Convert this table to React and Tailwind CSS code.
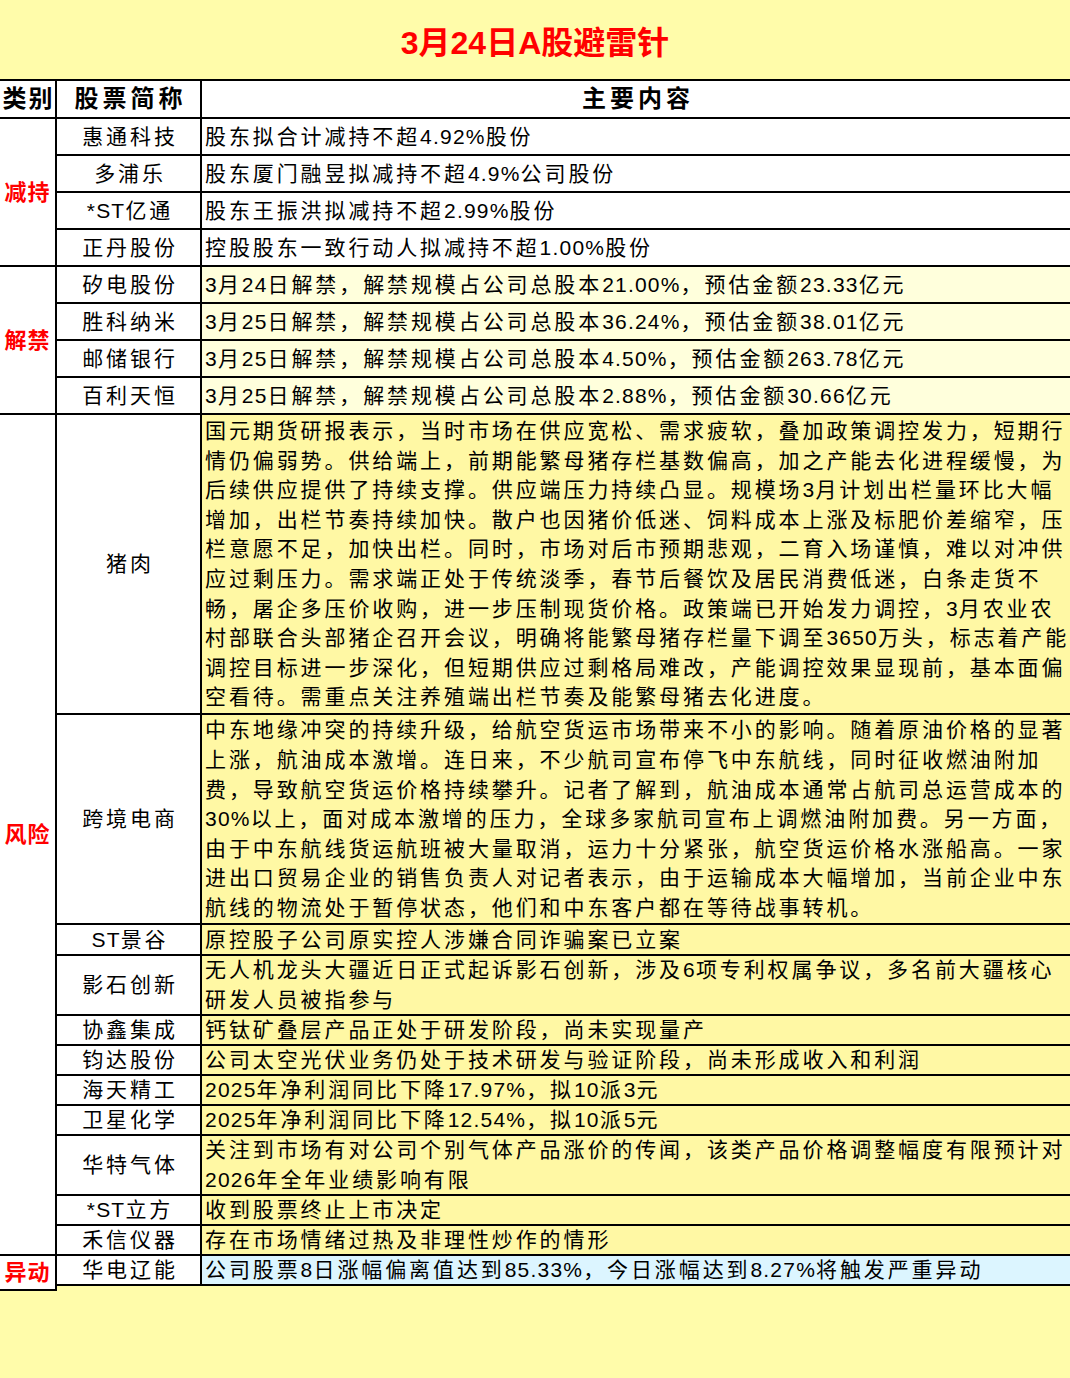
import React from "react";

const font = { fontFamily: '"Liberation Sans", "Noto Sans CJK SC", sans-serif' };

const groups = [
  {
    label: "减持",
    cell: "bg-white",
    rows: [
      ["惠通科技", ["股东拟合计减持不超4.92%股份"], "h-[37px]"],
      ["多浦乐", ["股东厦门融昱拟减持不超4.9%公司股份"], "h-[37px]"],
      ["*ST亿通", ["股东王振洪拟减持不超2.99%股份"], "h-[37px]"],
      ["正丹股份", ["控股股东一致行动人拟减持不超1.00%股份"], "h-[37px]"],
    ],
  },
  {
    label: "解禁",
    cell: "bg-[#ffffdc]",
    rows: [
      ["矽电股份", ["3月24日解禁，解禁规模占公司总股本21.00%，预估金额23.33亿元"], "h-[37px]"],
      ["胜科纳米", ["3月25日解禁，解禁规模占公司总股本36.24%，预估金额38.01亿元"], "h-[37px]"],
      ["邮储银行", ["3月25日解禁，解禁规模占公司总股本4.50%，预估金额263.78亿元"], "h-[37px]"],
      ["百利天恒", ["3月25日解禁，解禁规模占公司总股本2.88%，预估金额30.66亿元"], "h-[37px]"],
    ],
  },
  {
    label: "风险",
    cell: "bg-[#fff8a4]",
    rows: [
      [
        "猪肉",
        [
          "国元期货研报表示，当时市场在供应宽松、需求疲软，叠加政策调控发力，短期行",
          "情仍偏弱势。供给端上，前期能繁母猪存栏基数偏高，加之产能去化进程缓慢，为",
          "后续供应提供了持续支撑。供应端压力持续凸显。规模场3月计划出栏量环比大幅",
          "增加，出栏节奏持续加快。散户也因猪价低迷、饲料成本上涨及标肥价差缩窄，压",
          "栏意愿不足，加快出栏。同时，市场对后市预期悲观，二育入场谨慎，难以对冲供",
          "应过剩压力。需求端正处于传统淡季，春节后餐饮及居民消费低迷，白条走货不",
          "畅，屠企多压价收购，进一步压制现货价格。政策端已开始发力调控，3月农业农",
          "村部联合头部猪企召开会议，明确将能繁母猪存栏量下调至3650万头，标志着产能",
          "调控目标进一步深化，但短期供应过剩格局难改，产能调控效果显现前，基本面偏",
          "空看待。需重点关注养殖端出栏节奏及能繁母猪去化进度。",
        ],
        "h-[300px]",
      ],
      [
        "跨境电商",
        [
          "中东地缘冲突的持续升级，给航空货运市场带来不小的影响。随着原油价格的显著",
          "上涨，航油成本激增。连日来，不少航司宣布停飞中东航线，同时征收燃油附加",
          "费，导致航空货运价格持续攀升。记者了解到，航油成本通常占航司总运营成本的",
          "30%以上，面对成本激增的压力，全球多家航司宣布上调燃油附加费。另一方面，",
          "由于中东航线货运航班被大量取消，运力十分紧张，航空货运价格水涨船高。一家",
          "进出口贸易企业的销售负责人对记者表示，由于运输成本大幅增加，当前企业中东",
          "航线的物流处于暂停状态，他们和中东客户都在等待战事转机。",
        ],
        "h-[210px]",
      ],
      ["ST景谷", ["原控股子公司原实控人涉嫌合同诈骗案已立案"], "h-[31px]"],
      [
        "影石创新",
        ["无人机龙头大疆近日正式起诉影石创新，涉及6项专利权属争议，多名前大疆核心", "研发人员被指参与"],
        "h-[60px]",
      ],
      ["协鑫集成", ["钙钛矿叠层产品正处于研发阶段，尚未实现量产"], "h-[30px]"],
      ["钧达股份", ["公司太空光伏业务仍处于技术研发与验证阶段，尚未形成收入和利润"], "h-[30px]"],
      ["海天精工", ["2025年净利润同比下降17.97%，拟10派3元"], "h-[30px]"],
      ["卫星化学", ["2025年净利润同比下降12.54%，拟10派5元"], "h-[30px]"],
      [
        "华特气体",
        ["关注到市场有对公司个别气体产品涨价的传闻，该类产品价格调整幅度有限预计对", "2026年全年业绩影响有限"],
        "h-[60px]",
      ],
      ["*ST立方", ["收到股票终止上市决定"], "h-[30px]"],
      ["禾信仪器", ["存在市场情绪过热及非理性炒作的情形"], "h-[30px]"],
    ],
  },
  {
    label: "异动",
    cell: "bg-[#dcf5ff]",
    rows: [["华电辽能", ["公司股票8日涨幅偏离值达到85.33%，今日涨幅达到8.27%将触发严重异动"], "h-[30px]"]],
  },
];

// latin runs (digits, %, ST) sit tighter than the CJK text
const Text = ({ children }) =>
  children.split(/([\x20-\x7e]+)/).map((part, i) =>
    /^[\x20-\x7e]+$/.test(part) ? (
      <span key={i} className="tracking-[1.2px]">
        {part}
      </span>
    ) : (
      <React.Fragment key={i}>{part}</React.Fragment>
    )
  );

const Row = ({ name, lines, height, cell }) => (
  <div className={`flex border-b-2 border-black ${height}`}>
    <div className="w-[145px] shrink-0 border-r-2 border-black bg-white flex items-center justify-center pl-[3px]">
      <span className="whitespace-nowrap">
        <Text>{name}</Text>
      </span>
    </div>
    <div className={`flex-1 min-w-0 overflow-hidden flex flex-col justify-center pl-[3px] ${cell}`}>
      {lines.map((l, i) => (
        <div key={i} className="whitespace-nowrap leading-[29.6px]">
          <Text>{l}</Text>
        </div>
      ))}
    </div>
  </div>
);

export default function App() {
  return (
    <div
      className="w-[1070px] min-h-[1378px] bg-[#fffcaa] text-black text-[21px] tracking-[2.9px] overflow-hidden"
      style={font}
    >
      {/* title */}
      <div className="h-[81px] border-b-2 border-black flex items-center justify-center pt-[6px]">
        <h1 className="text-[32px] font-bold text-[#ff0000] tracking-normal leading-none">3月24日A股避雷针</h1>
      </div>

      {/* header */}
      <div className="flex h-[38px] border-b-2 border-black bg-white font-bold text-[24px]">
        <div className="w-[57px] shrink-0 border-r-2 border-black flex items-center justify-center tracking-[2px] pl-[2px]">
          类别
        </div>
        <div className="w-[145px] shrink-0 border-r-2 border-black flex items-center justify-center tracking-[4px] pl-[4px]">
          股票简称
        </div>
        <div className="flex-1 flex items-center justify-center tracking-[4px] pl-[4px]">主要内容</div>
      </div>

      {groups.map((g) => (
        <div key={g.label} className="flex">
          <div className="w-[57px] shrink-0 border-r-2 border-b-2 border-black bg-white flex items-center justify-center">
            <span className="text-[22px] font-bold text-[#ff0000] tracking-[1px] whitespace-nowrap">{g.label}</span>
          </div>
          <div className="flex-1 min-w-0 flex flex-col">
            {g.rows.map(([name, lines, height]) => (
              <Row key={name} name={name} lines={lines} height={height} cell={g.cell} />
            ))}
          </div>
        </div>
      ))}
    </div>
  );
}
